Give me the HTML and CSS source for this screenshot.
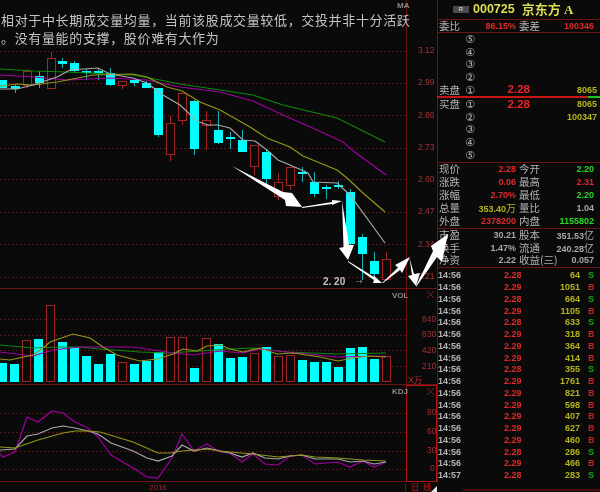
FILE: index.html
```html
<!DOCTYPE html>
<html lang="zh-CN">
<head>
  <meta charset="UTF-8">
  <title>000725 京东方A 日线</title>
  <link rel="stylesheet" href="styles.css">
</head>
<body>
  <div class="terminal">
    <!-- Chart column: price, volume, KDJ -->
    <div class="charts">
      <svg class="pane pane-price" viewBox="0 0 437 289">
        <g class="grid">
          <line x1="0" y1="51.5" x2="406" y2="51.5"/>
          <line x1="0" y1="83.5" x2="406" y2="83.5"/>
          <line x1="0" y1="115.5" x2="406" y2="115.5"/>
          <line x1="0" y1="148.5" x2="406" y2="148.5"/>
          <line x1="0" y1="179.5" x2="406" y2="179.5"/>
          <line x1="0" y1="212.5" x2="406" y2="212.5"/>
          <line x1="0" y1="244.5" x2="406" y2="244.5"/>
          <line x1="0" y1="277.5" x2="406" y2="277.5"/>
        </g>
        <line class="frame" x1="406.5" y1="0" x2="406.5" y2="289"/>
        <line class="frame" x1="0" y1="288.5" x2="437" y2="288.5"/>

        <!-- Falling days -->
        <g class="wick-down">
          <line x1="15.5" y1="84" x2="15.5" y2="93"/>
          <line x1="39.5" y1="71" x2="39.5" y2="88"/>
          <line x1="62.5" y1="58" x2="62.5" y2="68"/>
          <line x1="74.5" y1="61" x2="74.5" y2="73"/>
          <line x1="86.5" y1="69" x2="86.5" y2="80"/>
          <line x1="98.5" y1="69" x2="98.5" y2="80"/>
          <line x1="110.5" y1="68" x2="110.5" y2="86"/>
          <line x1="134.5" y1="78" x2="134.5" y2="86"/>
          <line x1="146.5" y1="81" x2="146.5" y2="88"/>
          <line x1="158.5" y1="88" x2="158.5" y2="137"/>
          <line x1="194.5" y1="100" x2="194.5" y2="155"/>
          <line x1="218.5" y1="111" x2="218.5" y2="144"/>
          <line x1="230.5" y1="132" x2="230.5" y2="149"/>
          <line x1="242.5" y1="130" x2="242.5" y2="152"/>
          <line x1="266.5" y1="150" x2="266.5" y2="185"/>
          <line x1="302.5" y1="167" x2="302.5" y2="182"/>
          <line x1="314.5" y1="172" x2="314.5" y2="197"/>
          <line x1="326.5" y1="185" x2="326.5" y2="199"/>
          <line x1="338.5" y1="181" x2="338.5" y2="189"/>
          <line x1="350.5" y1="189" x2="350.5" y2="245"/>
          <line x1="362.5" y1="234" x2="362.5" y2="280"/>
          <line x1="374.5" y1="252" x2="374.5" y2="277"/>
        </g>
        <g class="body-down">
          <rect x="-2" y="80" width="9" height="8"/>
          <rect x="11" y="86" width="9" height="3"/>
          <rect x="35" y="76" width="9" height="7"/>
          <rect x="58" y="61" width="9" height="3"/>
          <rect x="70" y="63" width="9" height="8"/>
          <rect x="82" y="71" width="9" height="2"/>
          <rect x="94" y="71" width="9" height="2"/>
          <rect x="106" y="73" width="9" height="12"/>
          <rect x="130" y="80" width="9" height="3"/>
          <rect x="142" y="83" width="9" height="5"/>
          <rect x="154" y="88" width="9" height="47"/>
          <rect x="190" y="101" width="9" height="48"/>
          <rect x="214" y="130" width="9" height="13"/>
          <rect x="226" y="137" width="9" height="2"/>
          <rect x="238" y="140" width="9" height="12"/>
          <rect x="262" y="152" width="9" height="27"/>
          <rect x="298" y="172" width="9" height="2"/>
          <rect x="310" y="182" width="9" height="12"/>
          <rect x="322" y="187" width="9" height="2"/>
          <rect x="334" y="185" width="9" height="2"/>
          <rect x="346" y="192" width="9" height="52"/>
          <rect x="358" y="237" width="9" height="17"/>
          <rect x="370" y="261" width="9" height="13"/>
        </g>

        <!-- Rising days -->
        <g class="wick-up">
          <line x1="27.5" y1="69" x2="27.5" y2="71"/>
          <line x1="27.5" y1="85" x2="27.5" y2="88"/>
          <line x1="51.5" y1="52" x2="51.5" y2="58"/>
          <line x1="122.5" y1="85" x2="122.5" y2="89"/>
          <line x1="170.5" y1="116" x2="170.5" y2="123"/>
          <line x1="170.5" y1="154" x2="170.5" y2="161"/>
          <line x1="182.5" y1="120" x2="182.5" y2="125"/>
          <line x1="206.5" y1="111" x2="206.5" y2="120"/>
          <line x1="206.5" y1="125" x2="206.5" y2="150"/>
          <line x1="254.5" y1="166" x2="254.5" y2="175"/>
          <line x1="278.5" y1="173" x2="278.5" y2="182"/>
          <line x1="278.5" y1="196" x2="278.5" y2="200"/>
          <line x1="290.5" y1="185" x2="290.5" y2="190"/>
          <line x1="386.5" y1="252" x2="386.5" y2="259"/>
        </g>
        <g class="body-up">
          <rect x="23.5" y="71.5" width="8" height="14"/>
          <rect x="47.5" y="58.5" width="8" height="30"/>
          <rect x="118.5" y="81.5" width="8" height="4"/>
          <rect x="166.5" y="123.5" width="8" height="31"/>
          <rect x="178.5" y="93.5" width="8" height="27"/>
          <rect x="202.5" y="120.5" width="8" height="5"/>
          <rect x="250.5" y="145.5" width="8" height="21"/>
          <rect x="274.5" y="182.5" width="8" height="14"/>
          <rect x="286.5" y="167.5" width="8" height="18"/>
          <rect x="382.5" y="259.5" width="8" height="20"/>
        </g>

        <!-- Moving averages -->
        <polyline class="line-green" points="0,69 33,71 67,72 110,74 133,75 160,80 180,84 220,90 253,95 283,105 337,118 385,142"/>
        <polyline class="line-purple" points="0,75 33,77 67,80 110,78 147,80 180,87 220,92 253,101 283,115 317,130 343,142 352,150 386,175"/>
        <polyline class="line-yellow" points="0,86 17,84 33,85 57,82 93,75 133,74 147,77 167,87 182,91 200,102 220,110 250,127 267,138 290,147 303,156 337,170 347,178 363,193 385,212"/>
        <polyline class="line-white" points="0,89 17,89 33,85 57,77 70,70 98,68 110,74 133,78 147,83 163,95 180,105 197,121 208,125 218,125 230,128 243,140 255,141 267,150 278,160 297,168 308,173 313,182 337,183 350,195 385,243"/>

        <text class="tag" x="397" y="8">MA</text>
        <g class="axis-label">
          <text x="418" y="53">3.12</text>
          <text x="418" y="85">2.99</text>
          <text x="418" y="118">2.86</text>
          <text x="418" y="150">2.73</text>
          <text x="418" y="182">2.60</text>
          <text x="418" y="214">2.47</text>
          <text x="418" y="247">2.34</text>
          <text x="418" y="279">2.21</text>
        </g>
        <text class="low-price" x="323" y="285">2. 20</text>
        <text class="low-arrow" x="356" y="284">→</text>
      </svg>

      <svg class="pane pane-volume" viewBox="0 289 437 96">
        <g class="grid">
          <line x1="0" y1="319.5" x2="406" y2="319.5"/>
          <line x1="0" y1="335.5" x2="406" y2="335.5"/>
          <line x1="0" y1="350.5" x2="406" y2="350.5"/>
          <line x1="0" y1="366.5" x2="406" y2="366.5"/>
        </g>
        <line class="frame" x1="406.5" y1="289" x2="406.5" y2="385"/>
        <line class="frame" x1="0" y1="384.5" x2="437" y2="384.5"/>

        <g class="body-down">
          <rect x="-2" y="363" width="9" height="19"/>
          <rect x="10" y="364" width="9" height="18"/>
          <rect x="34" y="339" width="9" height="43"/>
          <rect x="58" y="342" width="9" height="40"/>
          <rect x="70" y="347" width="9" height="35"/>
          <rect x="82" y="356" width="9" height="26"/>
          <rect x="94" y="364" width="9" height="18"/>
          <rect x="106" y="354" width="9" height="28"/>
          <rect x="130" y="364" width="9" height="18"/>
          <rect x="142" y="361" width="9" height="21"/>
          <rect x="154" y="352" width="9" height="30"/>
          <rect x="190" y="368" width="9" height="14"/>
          <rect x="214" y="344" width="9" height="38"/>
          <rect x="226" y="358" width="9" height="24"/>
          <rect x="238" y="357" width="9" height="25"/>
          <rect x="262" y="347" width="9" height="35"/>
          <rect x="298" y="360" width="9" height="22"/>
          <rect x="310" y="362" width="9" height="20"/>
          <rect x="322" y="362" width="9" height="20"/>
          <rect x="334" y="367" width="9" height="15"/>
          <rect x="346" y="348" width="9" height="34"/>
          <rect x="358" y="347" width="9" height="35"/>
          <rect x="370" y="359" width="9" height="23"/>
        </g>
        <g class="body-up">
          <rect x="22.5" y="340.5" width="8" height="41"/>
          <rect x="46.5" y="305.5" width="8" height="76"/>
          <rect x="118.5" y="362.5" width="8" height="19"/>
          <rect x="166.5" y="337.5" width="8" height="44"/>
          <rect x="178.5" y="337.5" width="8" height="44"/>
          <rect x="202.5" y="338.5" width="8" height="43"/>
          <rect x="250.5" y="353.5" width="8" height="28"/>
          <rect x="274.5" y="356.5" width="8" height="25"/>
          <rect x="286.5" y="355.5" width="8" height="26"/>
          <rect x="382.5" y="356.5" width="8" height="25"/>
        </g>

        <polyline class="line-green" points="0,345 33,348 60,347 80,347 100,349 140,352 167,353 200,351 230,349 253,348 287,352 337,354 386,353"/>
        <polyline class="line-purple" points="0,352 33,356 53,350 80,347 133,347 167,352 193,355 220,351 243,353 260,349 287,352 337,357 386,356"/>
        <polyline class="line-yellow" points="0,359 10,360 33,355 43,348 50,342 73,334 90,338 103,347 117,355 140,361 157,359 173,354 183,349 197,351 207,346 220,345 230,349 243,352 260,348 277,354 293,353 320,357 338,361 353,358 370,356 386,357"/>

        <text class="tag" x="392" y="298">VOL</text>
        <path class="close-mark" d="M427 291l7 7m0-7l-7 7"/>
        <g class="axis-label">
          <text x="422" y="322">840</text>
          <text x="422" y="337">630</text>
          <text x="422" y="353">420</text>
          <text x="422" y="369">210</text>
          <text x="408" y="383">X万</text>
        </g>
      </svg>

      <svg class="pane pane-kdj" viewBox="0 385 437 98">
        <g class="grid">
          <line x1="0" y1="413.5" x2="406" y2="413.5"/>
          <line x1="0" y1="432.5" x2="406" y2="432.5"/>
          <line x1="0" y1="451.5" x2="406" y2="451.5"/>
          <line x1="0" y1="469.5" x2="406" y2="469.5"/>
        </g>
        <line class="frame" x1="0" y1="481.5" x2="406" y2="481.5"/>
        <rect class="frame-active" x="406.5" y="385.5" width="30" height="96"/>

        <polyline class="line-purple" points="0,454 3,457 15,452 27,417 38,422 52,411 63,413 75,422 88,428 98,437 111,455 133,468 147,477 158,478 172,458 182,434 194,451 207,444 220,452 230,453 242,462 253,454 265,464 278,465 290,456 302,455 315,464 338,462 350,467 363,461 374,467 386,462"/>
        <polyline class="line-white" points="0,450 15,449 27,436 38,434 52,428 63,426 75,428 88,431 98,434 111,443 133,451 147,458 158,461 172,456 182,445 194,451 207,448 220,451 230,453 242,457 253,453 265,458 278,459 290,456 302,455 315,459 338,459 350,462 363,461 374,464 386,462"/>
        <polyline class="line-yellow" points="0,447 15,448 38,440 63,433 75,431 88,431 100,432 133,442 158,453 170,453 182,451 207,449 220,451 230,452 253,454 278,457 302,455 315,457 338,458 363,460 386,461"/>

        <text class="tag" x="392" y="394">KDJ</text>
        <path class="close-mark" d="M427 388l7 7m0-7l-7 7"/>
        <g class="axis-label">
          <text x="427" y="415">90</text>
          <text x="427" y="434">60</text>
          <text x="427" y="453">30</text>
          <text x="430" y="471">0</text>
        </g>
      </svg>

      <div class="timeline">
        <div class="dates"><span class="year">2016</span></div>
        <div class="period">日 线<span class="resize-corner"></span></div>
      </div>
    </div>

    <!-- Quote panel -->
    <aside class="quote">
      <div class="title">
        <span class="badge">R</span>
        <span class="code">000725</span>
        <span class="name">京东方 A</span>
      </div>

      <div class="stat ratio">
        <span class="label">委比</span><span class="red">86.15%</span>
        <span class="label">委差</span><span class="red">100346</span>
      </div>

      <div class="book">
        <div class="level"><span></span><i>⑤</i></div>
        <div class="level"><span></span><i>④</i></div>
        <div class="level"><span></span><i>③</i></div>
        <div class="level"><span></span><i>②</i></div>
        <div class="level"><span class="label">卖盘</span><i>①</i><b>2.28</b><span class="yellow">8065</span></div>
      </div>
      <div class="book-bar"><span class="bar-sell"></span><span class="bar-buy"></span></div>
      <div class="book book-buy">
        <div class="level"><span class="label">买盘</span><i>①</i><b>2.28</b><span class="yellow">8065</span></div>
        <div class="level"><span></span><i>②</i><b></b><span class="yellow">100347</span></div>
        <div class="level"><span></span><i>③</i></div>
        <div class="level"><span></span><i>④</i></div>
        <div class="level"><span></span><i>⑤</i></div>
      </div>

      <div class="stats">
        <div class="stat"><span class="label">现价</span><span class="red">2.28</span><span class="label">今开</span><span class="green">2.20</span></div>
        <div class="stat"><span class="label">涨跌</span><span class="red">0.06</span><span class="label">最高</span><span class="red">2.31</span></div>
        <div class="stat"><span class="label">涨幅</span><span class="red">2.70%</span><span class="label">最低</span><span class="green">2.20</span></div>
        <div class="stat"><span class="label">总量</span><span class="yellow">353.40<em>万</em></span><span class="label">量比</span><span class="gray">1.04</span></div>
        <div class="stat"><span class="label">外盘</span><span class="red">2378200</span><span class="label">内盘</span><span class="green">1155802</span></div>
      </div>

      <div class="stats">
        <div class="stat"><span class="label">市盈</span><span class="gray">30.21</span><span class="label">股本</span><span class="gray">351.53<em>亿</em></span></div>
        <div class="stat"><span class="label">换手</span><span class="gray">1.47%</span><span class="label">流通</span><span class="gray">240.28<em>亿</em></span></div>
        <div class="stat"><span class="label">净资</span><span class="gray">2.22</span><span class="label">收益(三)</span><span class="gray">0.057</span></div>
      </div>

      <div class="trades">
        <div class="trade"><span>14:56</span><span class="red">2.28</span><span class="yellow">64</span><span class="sell">S</span></div>
        <div class="trade"><span>14:56</span><span class="red">2.29</span><span class="yellow">1051</span><span class="buy">B</span></div>
        <div class="trade"><span>14:56</span><span class="red">2.28</span><span class="yellow">664</span><span class="sell">S</span></div>
        <div class="trade"><span>14:56</span><span class="red">2.29</span><span class="yellow">1105</span><span class="buy">B</span></div>
        <div class="trade"><span>14:56</span><span class="red">2.28</span><span class="yellow">633</span><span class="sell">S</span></div>
        <div class="trade"><span>14:56</span><span class="red">2.29</span><span class="yellow">318</span><span class="buy">B</span></div>
        <div class="trade"><span>14:56</span><span class="red">2.29</span><span class="yellow">364</span><span class="buy">B</span></div>
        <div class="trade"><span>14:56</span><span class="red">2.29</span><span class="yellow">414</span><span class="buy">B</span></div>
        <div class="trade"><span>14:56</span><span class="red">2.28</span><span class="yellow">355</span><span class="sell">S</span></div>
        <div class="trade"><span>14:56</span><span class="red">2.29</span><span class="yellow">1761</span><span class="buy">B</span></div>
        <div class="trade"><span>14:56</span><span class="red">2.29</span><span class="yellow">821</span><span class="buy">B</span></div>
        <div class="trade"><span>14:56</span><span class="red">2.29</span><span class="yellow">598</span><span class="buy">B</span></div>
        <div class="trade"><span>14:56</span><span class="red">2.29</span><span class="yellow">407</span><span class="buy">B</span></div>
        <div class="trade"><span>14:56</span><span class="red">2.29</span><span class="yellow">627</span><span class="buy">B</span></div>
        <div class="trade"><span>14:56</span><span class="red">2.29</span><span class="yellow">460</span><span class="buy">B</span></div>
        <div class="trade"><span>14:56</span><span class="red">2.28</span><span class="yellow">286</span><span class="sell">S</span></div>
        <div class="trade"><span>14:56</span><span class="red">2.29</span><span class="yellow">466</span><span class="buy">B</span></div>
        <div class="trade"><span>14:57</span><span class="red">2.28</span><span class="yellow">283</span><span class="sell">S</span></div>
      </div>

      <div class="tabs"></div>
    </aside>

    <!-- Commentary pasted over the chart -->
    <p class="caption">相对于中长期成交量均量，当前该股成交量较低，交投并非十分活跃<br>。没有量能的支撑，股价难有大作为</p>

    <!-- Hand-drawn arrows over the chart -->
    <svg class="arrows" viewBox="0 0 600 492">
      <polygon points="232,166 283,192 292,193 302,207 286,206 285,200"/>
      <polygon points="302,207 332,202 332,200 342,201 332,205 332,204 302,208"/>
      <polygon points="342,201 349,245 354,245 348,260 339,248 343.5,247"/>
      <polygon points="348,261 374,277 373,275 382,283 373,283 374,280 348,262"/>
      <polygon points="382,283 398,267.5 395,265 410,257 402,273 400,270 383,283"/>
      <polygon points="409.5,258 414,274 420,273 416,286 408,276 412,275"/>
      <polygon points="416,286 433,251 431,246 448,234 442,262 437,257 416,287"/>
    </svg>
  </div>
</body>
</html>
```

FILE: styles.css
```css
:root {
  --bg: #0a0a0a;
  --frame: #6e1212;
  --frame-bright: #b01212;
  --text-gray: #b4b4b4;
  --text-red: #e02a2a;
  --text-yellow: #b4b41e;
  --text-green: #2ad82a;
  --num: "Liberation Sans", Arial, sans-serif;
  --cjk: "Noto Sans CJK SC", "Liberation Sans", sans-serif;
}

html, body {
  margin: 0;
  height: 100%;
  background: var(--bg);
  overflow: hidden;
}

.terminal {
  position: relative;
  display: flex;
  width: 600px;
  height: 492px;
  font-family: var(--num);
  color: var(--text-gray);
  filter: blur(0.3px);
}

/* Chart column */
.charts {
  display: flex;
  flex-direction: column;
  width: 437px;
  flex: none;
}

.pane {
  display: block;
  width: 437px;
  flex: none;
}

.pane-price { height: 289px; }
.pane-volume { height: 96px; }
.pane-kdj { height: 98px; }

.grid line {
  stroke: #5c1212;
  stroke-width: 1;
  stroke-dasharray: 2 2;
}

.frame {
  stroke: var(--frame);
  stroke-width: 1;
}

.frame-active {
  fill: none;
  stroke: var(--frame-bright);
  stroke-width: 1;
}

.body-down rect { fill: #00ffff; }

.wick-down line {
  stroke: #18b4b4;
  stroke-width: 1;
}

.body-up rect {
  fill: var(--bg);
  stroke: #a02626;
  stroke-width: 1;
}

.wick-up line {
  stroke: #a02626;
  stroke-width: 1;
}

polyline {
  fill: none;
  stroke-width: 1.2;
}

.line-green { stroke: #0a8a0a; }
.line-purple { stroke: #a000a0; }
.line-yellow { stroke: #96961a; }
.line-white { stroke: #a8a8a8; }

.tag {
  font-size: 8px;
  fill: #8c8c8c;
  font-weight: bold;
}

.axis-label text {
  font-family: var(--num), var(--cjk);
  font-size: 8.5px;
  fill: #a83030;
}

.close-mark {
  fill: none;
  stroke: #8e1a1a;
  stroke-width: 1;
}

.low-price {
  font-size: 10px;
  font-weight: bold;
  fill: #c4c4c4;
}

.low-arrow {
  font-family: "DejaVu Sans", sans-serif;
  font-size: 8px;
  fill: #8c8c8c;
}

.timeline {
  flex: 1;
  display: flex;
  min-height: 0;
}

.dates {
  width: 406px;
  padding-left: 149px;
  box-sizing: border-box;
  border-right: 1px solid var(--frame);
  flex: none;
}

.year {
  display: block;
  font-size: 8px;
  line-height: 9px;
  color: #9a3030;
}

.period {
  position: relative;
  flex: 1;
  padding-left: 5px;
  font-family: var(--cjk);
  font-size: 8.5px;
  line-height: 7.5px;
  word-spacing: 1.5px;
  white-space: nowrap;
  color: #d01818;
}

.resize-corner {
  position: absolute;
  right: 0;
  top: 3px;
  width: 0;
  height: 0;
  border-left: 6px solid transparent;
  border-bottom: 6px solid #e8e8e8;
}

/* Quote panel */
.quote {
  flex: 1;
  display: flex;
  flex-direction: column;
  font-size: 9px;
  font-weight: bold;
  line-height: 1;
}

.title {
  display: flex;
  align-items: center;
  height: 19px;
  padding-left: 15px;
  border-left: 1px solid var(--frame);
  border-bottom: 1px solid var(--frame);
  flex: none;
}

.badge {
  width: 16px;
  height: 7px;
  background: #4a4a4a;
  color: #c8c8c8;
  font-size: 6px;
  line-height: 7px;
  text-align: center;
}

.code {
  margin-left: 4px;
  font-size: 12.5px;
  color: #dcdc50;
}

.name {
  margin-left: 7px;
  font-family: "Liberation Serif", var(--cjk);
  font-size: 13px;
  color: #dcdc50;
}

.stat {
  display: grid;
  grid-template-columns: 24px 53px 24px 54px;
  column-gap: 0;
  align-items: center;
  height: 13px;
  padding-left: 1px;
  white-space: nowrap;
}

.stat > span:nth-child(2),
.stat > span:nth-child(4) {
  text-align: right;
}

.stat > span:nth-child(3) {
  margin-left: 3px;
}

.stat > span:nth-child(4) {
  margin-left: 3px;
}

.label {
  font-family: var(--cjk);
  font-size: 10.5px;
  font-weight: normal;
  color: var(--text-gray);
}

.red { color: var(--text-red); }
.yellow { color: var(--text-yellow); }
.green { color: var(--text-green); }
.gray { color: #a8a8a8; }

.stat em {
  font-family: var(--cjk);
  font-size: 10px;
  font-style: normal;
  font-weight: normal;
}

.ratio {
  border-left: 1px solid var(--frame);
  border-bottom: 1px solid var(--frame);
  height: 12px;
  flex: none;
}

.stats {
  border-left: 1px solid var(--frame);
  border-bottom: 1px solid var(--frame);
  flex: none;
}

.stats + .stats .stat {
  height: 12.7px;
}

.book {
  height: 63px;
  margin-top: -1px;
  padding-top: 1px;
  border-left: 1px solid var(--frame);
  flex: none;
}

.book-buy {
  height: 64px;
  margin-top: 0;
  padding-top: 0;
  border-bottom: 1px solid var(--frame);
}

.level {
  display: grid;
  grid-template-columns: 24px 14px 53px 67px;
  align-items: center;
  height: 12.7px;
  padding-left: 1px;
}

.level i {
  font-family: "DejaVu Sans", var(--cjk);
  font-size: 11px;
  font-style: normal;
  font-weight: normal;
  text-align: center;
  color: #bcbcbc;
}

.level b {
  font-size: 11.5px;
  color: #e8242c;
  text-align: right;
}

.level > span:last-child:not(:first-child) {
  text-align: right;
}

.book-bar {
  display: flex;
  height: 2px;
  flex: none;
}

.bar-sell {
  width: 151px;
  background: #c81414;
}

.bar-buy {
  flex: 1;
  background: #18c818;
}

.trades {
  height: 214px;
  padding-top: 2px;
  box-sizing: border-box;
  border-left: 1px solid var(--frame);
  flex: none;
}

.trade {
  display: grid;
  grid-template-columns: 66px 18px 58px 8px 10px;
  align-items: center;
  height: 11.76px;
}

.trade > span:nth-child(3) {
  text-align: right;
}

.trade > span:nth-child(4) {
  grid-column: 5;
}

.sell { color: #12a812; }
.buy { color: #c42020; }

.tabs {
  margin: 7px 0 0 26px;
  height: 2px;
  background: #4a1010;
}

/* Overlays */
.caption {
  position: absolute;
  top: 11px;
  left: 1px;
  margin: 0;
  font-family: var(--cjk);
  font-size: 13px;
  line-height: 18px;
  letter-spacing: 0.65px;
  color: #c4c4c4;
  white-space: nowrap;
}

.arrows {
  position: absolute;
  top: 0;
  left: 0;
  width: 600px;
  height: 492px;
  pointer-events: none;
}

.arrows polygon { fill: #ffffff; }
```
